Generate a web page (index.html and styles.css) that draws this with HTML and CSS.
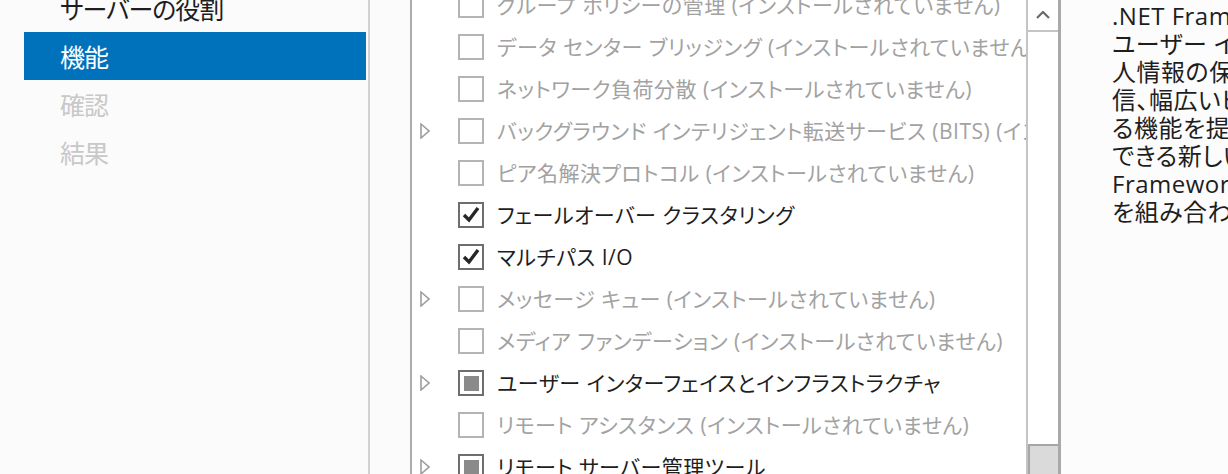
FILE: index.html
```html
<!DOCTYPE html>
<html lang="ja">
<head>
<meta charset="utf-8">
<title>機能の選択</title>
<link rel="stylesheet" href="styles.css">
</head>
<body>
<div class="page">
  <nav class="nav">
    <div class="nav-item">サーバーの役割</div>
    <div class="nav-item active">機能</div>
    <div class="nav-item disabled">確認</div>
    <div class="nav-item disabled">結果</div>
  </nav>
  <div class="gutter"></div>
  <div class="listbox">
    <div class="list">
      <div class="rows">
        <div class="row off"><span class="exp"></span><span class="cb"></span><span class="label">グループ ポリシーの管理 (インストールされていません)</span></div>
        <div class="row off"><span class="exp"></span><span class="cb"></span><span class="label">データ センター ブリッジング (インストールされていません)</span></div>
        <div class="row off"><span class="exp"></span><span class="cb"></span><span class="label">ネットワーク負荷分散 (インストールされていません)</span></div>
        <div class="row off"><span class="exp"><svg class="tri" viewBox="0 0 10 16"><path d="M1 1 L9 8 L1 15 Z"/></svg></span><span class="cb"></span><span class="label">バックグラウンド インテリジェント転送サービス (BITS) (インストールされていません)</span></div>
        <div class="row off"><span class="exp"></span><span class="cb"></span><span class="label">ピア名解決プロトコル (インストールされていません)</span></div>
        <div class="row"><span class="exp"></span><span class="cb on"><svg class="check" viewBox="0 0 22 22"><path d="M4 11 L9 16 L18 4"/></svg></span><span class="label">フェールオーバー クラスタリング</span></div>
        <div class="row"><span class="exp"></span><span class="cb on"><svg class="check" viewBox="0 0 22 22"><path d="M4 11 L9 16 L18 4"/></svg></span><span class="label">マルチパス I/O</span></div>
        <div class="row off"><span class="exp"><svg class="tri" viewBox="0 0 10 16"><path d="M1 1 L9 8 L1 15 Z"/></svg></span><span class="cb"></span><span class="label">メッセージ キュー (インストールされていません)</span></div>
        <div class="row off"><span class="exp"></span><span class="cb"></span><span class="label">メディア ファンデーション (インストールされていません)</span></div>
        <div class="row"><span class="exp"><svg class="tri" viewBox="0 0 10 16"><path d="M1 1 L9 8 L1 15 Z"/></svg></span><span class="cb on"><span class="partial"></span></span><span class="label">ユーザー インターフェイスとインフラストラクチャ</span></div>
        <div class="row off"><span class="exp"></span><span class="cb"></span><span class="label">リモート アシスタンス (インストールされていません)</span></div>
        <div class="row"><span class="exp"><svg class="tri" viewBox="0 0 10 16"><path d="M1 1 L9 8 L1 15 Z"/></svg></span><span class="cb on"><span class="partial"></span></span><span class="label">リモート サーバー管理ツール</span></div>
      </div>
    </div>
    <div class="scrollbar">
      <div class="sb-up"><svg viewBox="0 0 14 8"><path d="M1 7 L7 1 L13 7"/></svg></div>
      <div class="sb-track"><div class="sb-thumb"></div></div>
    </div>
  </div>
  <div class="desc">
    <p class="line">.NET Framework 3.5 は、.NET Framework 2.0 API の能力と、魅力的な</p>
    <p class="line">ユーザー インターフェイスの構築、顧客の個</p>
    <p class="line">人情報の保護、シームレスで安全な通</p>
    <p class="line">信、幅広いビジネス プロセスのモデル化を実現す</p>
    <p class="line">る機能を提供するアプリケーションを構築</p>
    <p class="line">できる新しいテクノロジと、.NET</p>
    <p class="line">Framework 2.0 API の機能</p>
    <p class="line">を組み合わせたものです。</p>
  </div>
</div>
</body>
</html>
```
FILE: styles.css
```css
html, body {
  margin: 0;
  padding: 0;
}
body {
  width: 1228px;
  height: 474px;
  overflow: hidden;
  background: #fcfcfc;
  font-family: "Noto Sans CJK JP", "Noto Sans", sans-serif;
  font-feature-settings: "palt";
}
.page {
  display: flex;
  height: 474px;
  overflow: hidden;
}
.nav {
  flex: none;
  width: 342px;
  padding: 0 2px 0 24px;
  background: #fbfbfb;
  border-right: 2px solid #d2d2d2;
  display: flex;
  flex-direction: column;
  margin-top: -16px;
  height: 490px;
}
.nav-item {
  height: 48px;
  line-height: 48px;
  padding-left: 36px;
  font-size: 25px;
  letter-spacing: -1px;
  color: #1e1e1e;
  flex: none;
}
.nav-item.active {
  background: #0072bc;
  color: #ffffff;
}
.nav-item.disabled {
  color: #c8c8c8;
}
.gutter {
  width: 40px;
  background: #fbfbfb;
  flex: none;
}
.listbox {
  flex: none;
  width: 646px;
  height: 474px;
  display: flex;
  border-left: 2px solid #acacac;
  border-right: 3px solid #a9a9a9;
  background: #ffffff;
}
.list {
  width: 614px;
  overflow: hidden;
  flex: none;
}
.rows {
  margin-top: -16px;
}
.row {
  height: 42px;
  display: flex;
  align-items: center;
  padding-left: 8px;
  white-space: nowrap;
  font-family: "Open Sans", "Noto Sans CJK JP", sans-serif;
  font-size: 21px;
  letter-spacing: 0.5px;
  color: #1e1e1e;
}
.row.off {
  color: #a2a2a2;
}
.exp {
  width: 38px;
  flex: none;
  display: flex;
  align-items: center;
}
.tri {
  width: 10px;
  height: 16px;
  fill: none;
  stroke: #9e9e9e;
  stroke-width: 1.6;
}
.cb {
  width: 22px;
  height: 22px;
  flex: none;
  border: 2px solid #b4b4b4;
  margin-right: 13px;
  background: #ffffff;
  display: flex;
  align-items: center;
  justify-content: center;
}
.cb.on {
  border-color: #6e6e6e;
}
.check {
  width: 22px;
  height: 22px;
  fill: none;
  stroke: #262626;
  stroke-width: 3.4;
}
.partial {
  width: 15px;
  height: 15px;
  background: #8a8a8a;
}
.label {
  line-height: 42px;
}
.scrollbar {
  width: 30px;
  flex: none;
  border-left: 2px solid #c4c4c4;
  display: flex;
  flex-direction: column;
}
.sb-up {
  height: 30px;
  flex: none;
  border-bottom: 2px solid #c4c4c4;
  display: flex;
  align-items: center;
  justify-content: center;
}
.sb-up svg {
  width: 14px;
  height: 8px;
  fill: none;
  stroke: #6a6a6a;
  stroke-width: 2.2;
}
.sb-track {
  flex: 1;
  padding-top: 412px;
}
.sb-thumb {
  height: 60px;
  background: #dadada;
  border: 2px solid #a6a6a6;
  border-right-width: 0;
}
.desc {
  flex: 1;
  min-width: 0;
  overflow: hidden;
  padding: 2px 0 0 51px;
  background: #fcfcfc;
  font-family: "Open Sans", "Noto Sans CJK JP", sans-serif;
  font-size: 24px;
  letter-spacing: 0.5px;
  color: #1e1e1e;
}
.line {
  margin: 0;
  height: 28px;
  line-height: 28px;
  white-space: nowrap;
}
```
